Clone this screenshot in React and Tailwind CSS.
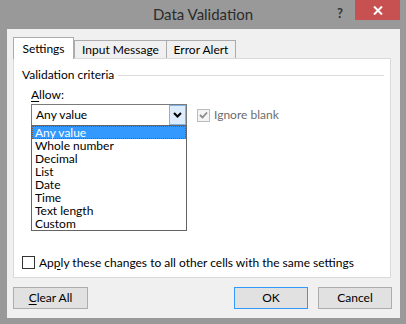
import React from "react";

function Check({ disabled, checked }) {
  return (
    <div
      className={
        "w-[13px] h-[13px] border flex items-center justify-center shrink-0 " +
        (disabled ? "border-[#bcbcbc] bg-[#f4f4f4]" : "border-[#333333] bg-white")
      }
    >
      {checked && (
        <svg width="9" height="8" viewBox="0 0 9 8">
          <path d="M1 4 L3.5 6.5 L8 1.5" stroke="#8a8a8a" strokeWidth="1.8" fill="none" />
        </svg>
      )}
    </div>
  );
}

export default function App() {
  const items = ["Any value", "Whole number", "Decimal", "List", "Date", "Time", "Text length", "Custom"];
  return (
    <div
      className="w-[406px] h-[324px] bg-[#999999] flex flex-col text-[12px] text-black"
      style={{ fontFamily: 'Lato, "Open Sans", sans-serif' }}
    >
      <div className="h-[29px] relative flex items-center justify-center">
        <span className="text-[15px] text-[#2b2b2b] leading-none -mt-[1px]">Data Validation</span>
        <span className="absolute left-[337px] top-[4px] text-[13px] font-bold text-[#333]">?</span>
        <div className="absolute left-[355px] top-0 w-[45px] h-[20px] bg-[#c75050] flex items-center justify-center">
          <svg width="10" height="9" viewBox="0 0 10 9">
            <path d="M1 0.5 L9 8.5 M9 0.5 L1 8.5" stroke="white" strokeWidth="2" />
          </svg>
        </div>
      </div>
      <div className="ml-[7px] w-[393px] h-[289px] bg-[#f0f0f0] pl-[6px] pt-[8px] flex flex-col">
        <div className="h-[21px] flex items-end">
          <div className="w-[61px] h-[22px] -mb-px border border-b-0 border-[#acacac] bg-white flex items-center justify-center relative z-10">
            Settings
          </div>
          <div className="w-[93px] h-[18px] border border-b-0 border-[#acacac] bg-[#f0f0f0] flex items-center justify-center">
            Input Message
          </div>
          <div className="w-[70px] h-[18px] -ml-px border border-b-0 border-[#acacac] bg-[#f0f0f0] flex items-center justify-center">
            Error Alert
          </div>
        </div>
        <div className="w-[378px] h-[220px] border border-[#d9d9d9] bg-white relative flex flex-col">
          <div className="flex items-center pl-[8px] pt-[8px] h-[24px]">
            <span className="leading-[16px]">Validation criteria</span>
            <div className="flex-1 h-px bg-[#dcdcdc] ml-[4px] mr-[6px]" />
          </div>
          <div className="pl-[17px] mt-[4px] leading-[16px]">
            <span className="underline underline-offset-2">A</span>llow:
          </div>
          <div className="flex items-center pl-[17px] mt-[1px]">
            <div className="w-[156px] h-[22px] border border-[#7a7a7a] bg-white flex items-center">
              <span className="flex-1 pl-[4px] leading-none">Any value</span>
              <div className="w-[17px] h-[20px] border border-[#7eb4ea] bg-[#dcecfc] flex items-center justify-center">
                <svg width="9" height="6" viewBox="0 0 9 6">
                  <path d="M1 1 L4.5 4.5 L8 1" stroke="black" strokeWidth="2" fill="none" />
                </svg>
              </div>
            </div>
            <div className="ml-[10px] flex items-center gap-[4px]">
              <Check disabled checked />
              <span className="text-[#6d6d6d] leading-none">Ignore blank</span>
            </div>
          </div>
          <div className="mt-auto mb-[8px] pl-[8px] flex items-center gap-[4px]">
            <Check />
            <span className="leading-none">
              Ap<span className="underline underline-offset-2">p</span>ly these changes to all other cells with the same settings
            </span>
          </div>
          <div className="absolute left-[17px] top-[66px] w-[156px] h-[106px] border border-[#646464] bg-white flex flex-col">
            {items.map((it, i) => (
              <div
                key={it}
                className={
                  "h-[13px] flex items-center pl-[3px] leading-[13px] " +
                  (i === 0 ? "bg-[#3399ff] text-white outline-1 outline-dotted outline-[#8a5a2a] -outline-offset-1" : "")
                }
              >
                {it}
              </div>
            ))}
          </div>
        </div>
        <div className="w-[379px] mt-[9px] flex justify-between">
          <button className="w-[75px] h-[22px] border border-[#adadad] bg-[#e1e1e1] flex items-center justify-center">
            <span>
              <span className="underline underline-offset-2">C</span>lear All
            </span>
          </button>
          <div className="flex gap-[10px]">
            <button className="w-[74px] h-[22px] border border-[#3399ff] bg-[#e1e1e1] flex items-center justify-center">OK</button>
            <button className="w-[74px] h-[22px] border border-[#adadad] bg-[#e1e1e1] flex items-center justify-center">Cancel</button>
          </div>
        </div>
      </div>
    </div>
  );
}
